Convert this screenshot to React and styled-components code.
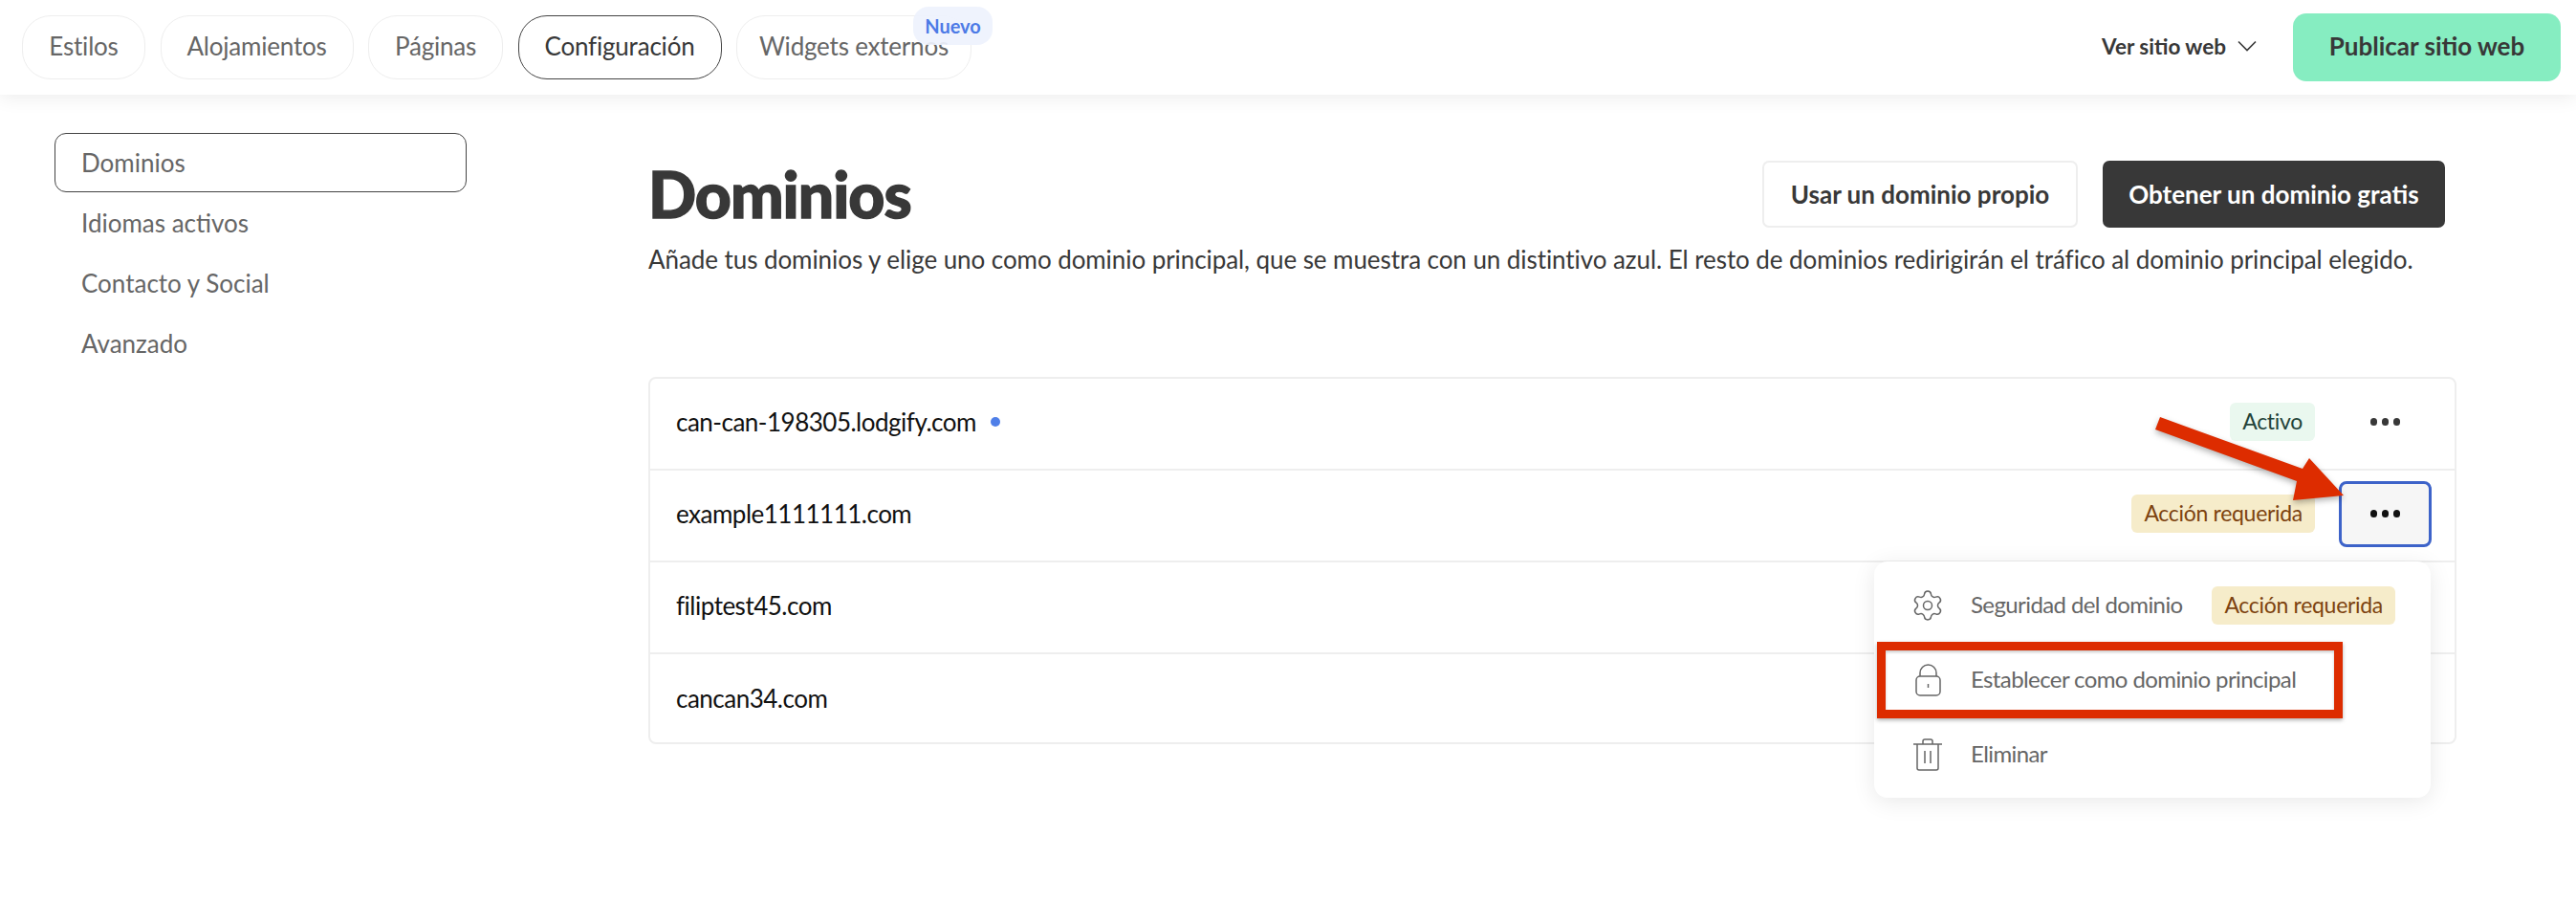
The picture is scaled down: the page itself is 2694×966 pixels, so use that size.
import React from "react"
import styled, { createGlobalStyle } from "styled-components"
import { Settings } from "lucide-react"

const fontStack = "'Lato', 'Noto Sans', sans-serif"

const GlobalStyle = createGlobalStyle`
  html, body {
    margin: 0;
    background: #fff;
    font-family: ${fontStack};
    color: #383838;
  }
  * {
    box-sizing: border-box;
  }
`

const Page = styled.div`
  position: relative;
  width: 2694px;
  height: 966px;
  overflow: hidden;
`

const Header = styled.header`
  display: flex;
  align-items: center;
  justify-content: space-between;
  height: 99px;
  padding: 0 16px 0 23px;
  background: #fff;
  box-shadow: 0 4px 18px rgba(0, 0, 0, 0.07);
`

const Tabs = styled.nav`
  display: flex;
  gap: 15.5px;
`

const Tab = styled.div`
  position: relative;
  display: flex;
  align-items: center;
  justify-content: center;
  width: ${(p) => p.$w}px;
  height: 67px;
  padding-bottom: 3px;
  border: ${(p) => (p.$active ? "1.5px solid #444" : "1.5px solid #eee")};
  border-radius: 30px;
  font-size: 26px;
  letter-spacing: -0.2px;
  color: ${(p) => (p.$active ? "#383838" : "#666")};
`

const NewBadge = styled.span`
  position: absolute;
  top: -10px;
  right: -23px;
  width: 83px;
  height: 40px;
  display: flex;
  align-items: center;
  justify-content: center;
  background: rgba(238, 242, 253, 0.92);
  border-radius: 16px;
  color: #4c7ae6;
  font-size: 20px;
  font-weight: 700;
  letter-spacing: 0;
`

const HeaderActions = styled.div`
  display: flex;
  align-items: center;
`

const ViewSite = styled.div`
  display: flex;
  align-items: center;
  gap: 12px;
  margin-right: 38px;
  padding-bottom: 3px;
  font-size: 22.5px;
  font-weight: 700;
`

const PublishButton = styled.button`
  width: 280px;
  height: 71px;
  padding-bottom: 4px;
  border: 0;
  border-radius: 14px;
  background: #86edc1;
  color: #383838;
  font-family: inherit;
  font-size: 26px;
  font-weight: 700;
`

const Body = styled.div`
  display: flex;
  padding: 40px 125px 0 57px;
  gap: 190px;
`

const Sidebar = styled.aside`
  display: flex;
  flex-direction: column;
  gap: 1px;
  width: 431px;
  flex-shrink: 0;
`

const SideItem = styled.div`
  display: flex;
  align-items: center;
  height: 62px;
  padding-left: 27px;
  border: 1.5px solid ${(p) => (p.$active ? "#444" : "transparent")};
  border-radius: 12px;
  font-size: 26px;
  color: #666;
`

const Main = styled.main`
  flex: 1;
  padding-top: 29px;
`

const TitleRow = styled.div`
  display: flex;
  align-items: center;
  justify-content: space-between;
  padding-right: 12px;
`

const Title = styled.h1`
  margin: 0;
  font-size: 66px;
  line-height: 70px;
  font-weight: 900;
  color: #383838;
  letter-spacing: -1px;
  -webkit-text-stroke: 1.4px #383838;
`

const TitleActions = styled.div`
  display: flex;
  gap: 26px;
`

const ActionButton = styled.button`
  height: 70px;
  width: ${(p) => p.$w}px;
  padding-bottom: 2px;
  border: ${(p) => (p.$dark ? "0" : "2px solid #eee")};
  border-radius: 7px;
  background: ${(p) => (p.$dark ? "#383838" : "#fff")};
  color: ${(p) => (p.$dark ? "#fff" : "#383838")};
  font-family: inherit;
  font-size: 26px;
  font-weight: 700;
`

const Description = styled.p`
  margin: 15px 0 0;
  font-size: 26px;
  line-height: 36px;
  letter-spacing: -0.07px;
  color: #383838;
  white-space: nowrap;
`

const Table = styled.div`
  position: relative;
  margin-top: 105px;
  height: 384px;
  border: 2px solid #eee;
  border-radius: 8px;
`

const Row = styled.div`
  display: flex;
  align-items: center;
  height: 96px;
  padding: 0 24px 4px 27px;
  border-bottom: ${(p) => (p.$last ? "0" : "2px solid #eee")};
  font-size: 26px;
  letter-spacing: -0.5px;
  font-variant-ligatures: none;
  color: #111;
`

const DomainName = styled.span`
  flex: 1;
  display: flex;
  align-items: center;
  gap: 15px;
`

const PrimaryDot = styled.span`
  width: 10px;
  height: 10px;
  border-radius: 50%;
  background: #4f7fe8;
`

const Badge = styled.span`
  display: inline-flex;
  align-items: center;
  height: 40px;
  padding: 0 13px 2px;
  border-radius: 6px;
  font-size: 23px;
  letter-spacing: -0.3px;
  background: ${(p) => (p.$tone === "ok" ? "#eaf8ef" : "#f6ecca")};
  color: ${(p) => (p.$tone === "ok" ? "#24443a" : "#7d4310")};
`

const MoreButton = styled.div`
  display: flex;
  align-items: center;
  justify-content: center;
  gap: 4.5px;
  width: 97px;
  height: 69px;
  margin-left: 25px;
  border: 3px solid ${(p) => (p.$open ? "#3d63c9" : "transparent")};
  border-radius: 8px;
  background: ${(p) => (p.$open ? "#f6f6f6" : "transparent")};
`

const Dot = styled.i`
  width: 7.5px;
  height: 7.5px;
  border-radius: 50%;
  background: ${(p) => (p.$open ? "#111" : "#383838")};
`

const Menu = styled.div`
  position: absolute;
  top: 191px;
  right: 25px;
  width: 582px;
  height: 247px;
  padding: 7px 37px 0 38px;
  background: #fff;
  border-radius: 14px;
  box-shadow: 0 4px 24px rgba(0, 0, 0, 0.09);
`

const MenuItem = styled.div`
  display: flex;
  align-items: center;
  height: 78px;
  font-size: 24px;
  letter-spacing: -0.6px;
  color: #666;
`

const MenuIcon = styled.span`
  display: flex;
  justify-content: center;
  width: 36px;
  margin-right: 27px;
`

const MenuLabel = styled.span`
  flex: 1;
  padding-bottom: 3px;
`

const RedBox = styled.div`
  position: absolute;
  left: 1963px;
  top: 671px;
  width: 487px;
  height: 80px;
  border: 9px solid #dd2c00;
  box-shadow: 0 2px 4px rgba(0, 0, 0, 0.3), inset 0 2px 3px rgba(0, 0, 0, 0.2);
`

const Arrow = styled.svg`
  position: absolute;
  left: 2240px;
  top: 430px;
  filter: drop-shadow(0 3px 3px rgba(0, 0, 0, 0.3));
`

const ChevronIcon = () => (
  <svg width="20" height="12" viewBox="0 0 20 12" fill="none" stroke="#383838" strokeWidth="1.6">
    <path d="M1 1.5 L10 10.5 L19 1.5" />
  </svg>
)

const LockIcon = () => (
  <svg width="27" height="34" viewBox="0 0 27 34" fill="none" stroke="#666" strokeWidth="1.5">
    <rect x="1" y="13" width="25" height="20" rx="4" />
    <path d="M5 13V9.5a8.5 8.5 0 0 1 17 0V13" />
    <path d="M13.5 21v4" />
  </svg>
)

const TrashIcon = () => (
  <svg width="30" height="34" viewBox="0 0 30 34" fill="none" stroke="#666" strokeWidth="1.5">
    <path d="M0 6h30" />
    <path d="M10 6V3a2 2 0 0 1 2-2h6a2 2 0 0 1 2 2v3" />
    <path d="M4 6v25a2 2 0 0 0 2 2h18a2 2 0 0 0 2-2V6" />
    <path d="M12 13v13M18 13v13" />
  </svg>
)

const tabs = [
  { label: "Estilos", w: 129 },
  { label: "Alojamientos", w: 202 },
  { label: "Páginas", w: 141 },
  { label: "Configuración", w: 213, active: true },
  { label: "Widgets externos", w: 246, isNew: true }
]

const sideItems = ["Dominios", "Idiomas activos", "Contacto y Social", "Avanzado"]

const MoreDots = ({ open }) => (
  <MoreButton $open={open}>
    <Dot $open={open} />
    <Dot $open={open} />
    <Dot $open={open} />
  </MoreButton>
)

export default function App() {
  return (
    <Page>
      <GlobalStyle />
      <Header>
        <Tabs>
          {tabs.map((tab) => (
            <Tab key={tab.label} $w={tab.w} $active={tab.active}>
              {tab.label}
              {tab.isNew && <NewBadge>Nuevo</NewBadge>}
            </Tab>
          ))}
        </Tabs>
        <HeaderActions>
          <ViewSite>
            Ver sitio web
            <ChevronIcon />
          </ViewSite>
          <PublishButton>Publicar sitio web</PublishButton>
        </HeaderActions>
      </Header>

      <Body>
        <Sidebar>
          {sideItems.map((item, index) => (
            <SideItem key={item} $active={index === 0}>
              {item}
            </SideItem>
          ))}
        </Sidebar>

        <Main>
          <TitleRow>
            <Title>Dominios</Title>
            <TitleActions>
              <ActionButton $w={330}>Usar un dominio propio</ActionButton>
              <ActionButton $w={358} $dark>
                Obtener un dominio gratis
              </ActionButton>
            </TitleActions>
          </TitleRow>
          <Description>
            Añade tus dominios y elige uno como dominio principal, que se muestra con un distintivo azul. El resto de dominios redirigirán el tráfico al dominio principal elegido.
          </Description>

          <Table>
            <Row>
              <DomainName>
                can-can-198305.lodgify.com
                <PrimaryDot />
              </DomainName>
              <Badge $tone="ok">Activo</Badge>
              <MoreDots />
            </Row>
            <Row>
              <DomainName>example1111111.com</DomainName>
              <Badge>Acción requerida</Badge>
              <MoreDots open />
            </Row>
            <Row>
              <DomainName>filiptest45.com</DomainName>
            </Row>
            <Row $last>
              <DomainName>cancan34.com</DomainName>
            </Row>

            <Menu>
              <MenuItem>
                <MenuIcon>
                  <Settings size={36} strokeWidth={1} color="#666" />
                </MenuIcon>
                <MenuLabel>Seguridad del dominio</MenuLabel>
                <Badge>Acción requerida</Badge>
              </MenuItem>
              <MenuItem>
                <MenuIcon>
                  <LockIcon />
                </MenuIcon>
                <MenuLabel>Establecer como dominio principal</MenuLabel>
              </MenuItem>
              <MenuItem>
                <MenuIcon>
                  <TrashIcon />
                </MenuIcon>
                <MenuLabel>Eliminar</MenuLabel>
              </MenuItem>
            </Menu>
          </Table>
        </Main>
      </Body>

      <RedBox />
      <Arrow width="220" height="100" viewBox="2240 430 220 100">
        <path fill="#dd2c00" d="M2259 436 L2254 449 L2402 503 L2398 523 L2451 518 L2415 479 L2408 490 Z" />
      </Arrow>
    </Page>
  )
}
